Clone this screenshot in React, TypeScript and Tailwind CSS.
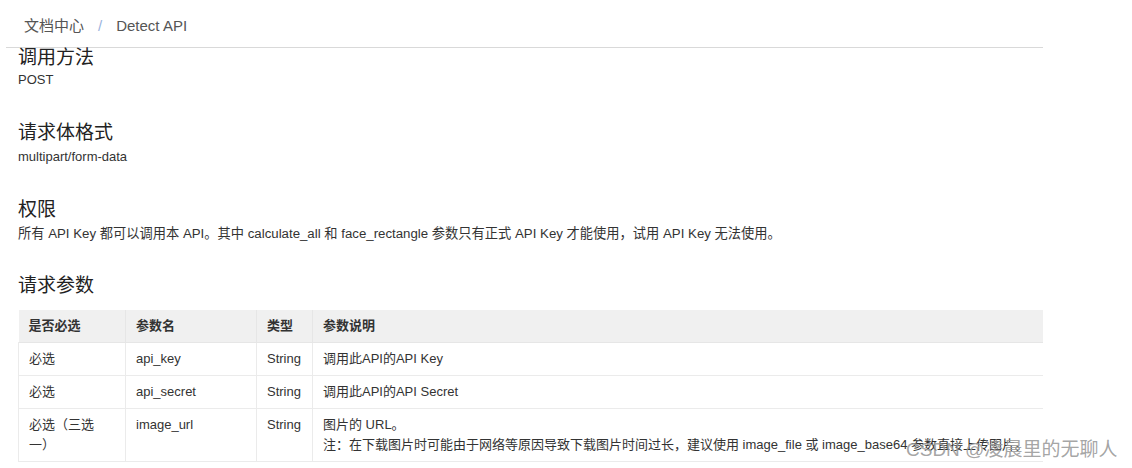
import React from "react";

const font = { fontFamily: '"Liberation Sans", Arial, "Noto Sans CJK SC", sans-serif' };

const rows = [
  { req: "必选", name: "api_key", type: "String", desc: ["调用此API的API Key"] },
  { req: "必选", name: "api_secret", type: "String", desc: ["调用此API的API Secret"] },
  {
    req: "必选（三选一）",
    name: "image_url",
    type: "String",
    desc: [
      "图片的 URL。",
      "注：在下载图片时可能由于网络等原因导致下载图片时间过长，建议使用 image_file 或 image_base64 参数直接上传图片。",
    ],
  },
];

export default function App() {
  return (
    <div className="relative w-[1132px] h-[468px] overflow-hidden bg-white text-[#333]" style={font}>
      <div className="ml-[6px] w-[1037px] h-[48px] border-b border-[#d9d9d9] flex items-center pl-[18px] pt-[6px] text-[15px] text-[#555]">
        <span>文档中心</span>
        <span className="mx-[14px] text-[#9bb3de]">/</span>
        <span>Detect API</span>
      </div>
      <div className="pl-[18px] w-[1043px]">
        <h2 className="text-[19px] leading-[20px] text-[#222]">调用方法</h2>
        <p className="text-[13px] leading-[24px]">POST</p>
        <h2 className="mt-[29px] text-[19px] leading-[24px] text-[#222]">请求体格式</h2>
        <p className="text-[13px] leading-[24px]">multipart/form-data</p>
        <h2 className="mt-[29px] text-[19px] leading-[24px] text-[#222]">权限</h2>
        <p className="text-[13.25px] leading-[24px]">
          所有 API Key 都可以调用本 API。其中 calculate_all 和 face_rectangle 参数只有正式 API Key 才能使用，试用 API Key 无法使用。
        </p>
        <h2 className="mt-[28px] text-[19px] leading-[24px] text-[#222]">请求参数</h2>
        <table className="mt-[12px] w-[1025px] table-fixed border-collapse text-[13px] leading-[20px]">
          <colgroup>
            <col className="w-[107px]" />
            <col className="w-[131px]" />
            <col className="w-[56px]" />
            <col />
          </colgroup>
          <thead>
            <tr className="bg-[#f0f0f0] border-b border-[#e6e6e6]">
              <th className="text-left font-bold px-[10px] py-[6px] text-[13px] text-[#333] border-r border-[#e6e6e6]">是否必选</th>
              <th className="text-left font-bold px-[10px] py-[6px] text-[13px] text-[#333] border-r border-[#e6e6e6]">参数名</th>
              <th className="text-left font-bold px-[10px] py-[6px] text-[13px] text-[#333] border-r border-[#e6e6e6]">类型</th>
              <th className="text-left font-bold px-[10px] py-[6px] text-[13px] text-[#333]">参数说明</th>
            </tr>
          </thead>
          <tbody>
            {rows.map((r, i) => (
              <tr key={i} className="border-b border-[#ebebeb] align-top">
                <td className="px-[10px] py-[6px] border-r border-[#ebebeb] border-l">
                  <div className="w-[80px]">{r.req}</div>
                </td>
                <td className="px-[10px] py-[6px] border-r border-[#ebebeb]">{r.name}</td>
                <td className="px-[10px] py-[6px] border-r border-[#ebebeb]">{r.type}</td>
                <td className="px-[10px] py-[6px] whitespace-nowrap">
                  {r.desc.map((d, j) => (
                    <div key={j}>{d}</div>
                  ))}
                </td>
              </tr>
            ))}
          </tbody>
        </table>
      </div>
      <div className="absolute left-[906px] top-[438px] whitespace-nowrap text-[19px] leading-[24px] text-[#9a9a9a]/90" style={font}>
        CSDN @凌晨里的无聊人
      </div>
    </div>
  );
}
